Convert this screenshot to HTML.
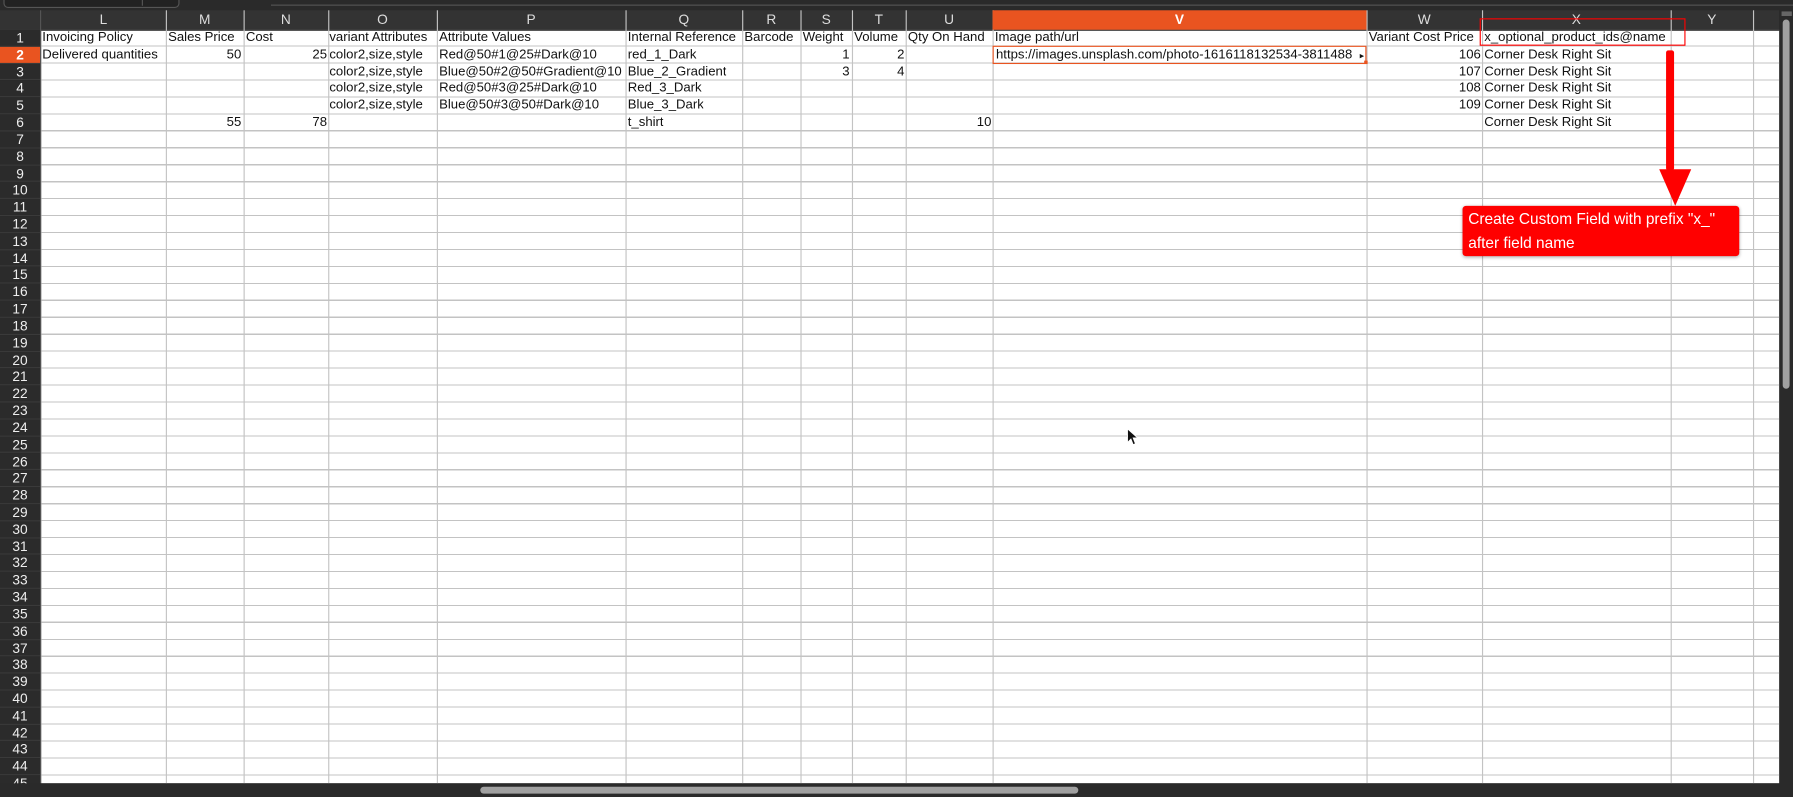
<!DOCTYPE html>
<html><head><meta charset="utf-8">
<style>
html,body{margin:0;padding:0;width:1793px;height:797px;overflow:hidden;background:#2a2a2a}
#s{position:absolute;left:0;top:0;width:1568px;height:697px;transform:scale(1.14349);transform-origin:0 0;background:#2a2a2a;font-family:"Liberation Sans",sans-serif;overflow:hidden}
.grid{position:absolute;left:36px;top:26px;width:1520px;height:659px;background:#fff}
.vl{position:absolute;top:9px;width:1px;height:676px;background:#c3c3c3}
.hdr{position:absolute;left:0;top:9px;width:1556px;height:17px;background:#333;border-bottom:1px solid #555}
.hl{position:absolute;top:9px;height:17px;line-height:17px;text-align:center;color:#ddd;font-size:12px}
.rn{position:absolute;left:0;width:35px;height:14.82px;line-height:15px;text-align:center;color:#eee;font-size:12px;background:#2b2b2b;border-bottom:1px solid #3a3a3a;box-sizing:border-box}
.c{position:absolute;height:14.82px;line-height:15.5px;font-size:11.5px;color:#111;white-space:nowrap;overflow:hidden}
.r{text-align:right}
</style></head><body><div id="s">
<div style="position:absolute;left:3px;top:-4px;width:152px;height:9px;border:1px solid #555;border-radius:4px;background:#222"></div>
<div style="position:absolute;left:124px;top:0;width:1px;height:5px;background:#555"></div>
<div style="position:absolute;left:237px;top:4px;width:1331px;height:1px;background:#555"></div>
<div class="grid"></div>
<svg style="position:absolute;left:36px;top:26px" width="1520" height="660" shape-rendering="crispEdges">
<g stroke="#c3c3c3" stroke-width="1">
<line x1="0" x2="1520" y1="14.3" y2="14.3"/><line x1="0" x2="1520" y1="29.1" y2="29.1"/><line x1="0" x2="1520" y1="43.9" y2="43.9"/><line x1="0" x2="1520" y1="58.8" y2="58.8"/><line x1="0" x2="1520" y1="73.6" y2="73.6"/><line x1="0" x2="1520" y1="88.4" y2="88.4"/><line x1="0" x2="1520" y1="103.2" y2="103.2"/><line x1="0" x2="1520" y1="118.1" y2="118.1"/><line x1="0" x2="1520" y1="132.9" y2="132.9"/><line x1="0" x2="1520" y1="147.7" y2="147.7"/><line x1="0" x2="1520" y1="162.5" y2="162.5"/><line x1="0" x2="1520" y1="177.3" y2="177.3"/><line x1="0" x2="1520" y1="192.2" y2="192.2"/><line x1="0" x2="1520" y1="207" y2="207"/><line x1="0" x2="1520" y1="221.8" y2="221.8"/><line x1="0" x2="1520" y1="236.6" y2="236.6"/><line x1="0" x2="1520" y1="251.4" y2="251.4"/><line x1="0" x2="1520" y1="266.3" y2="266.3"/><line x1="0" x2="1520" y1="281.1" y2="281.1"/><line x1="0" x2="1520" y1="295.9" y2="295.9"/><line x1="0" x2="1520" y1="310.7" y2="310.7"/><line x1="0" x2="1520" y1="325.6" y2="325.6"/><line x1="0" x2="1520" y1="340.4" y2="340.4"/><line x1="0" x2="1520" y1="355.2" y2="355.2"/><line x1="0" x2="1520" y1="370" y2="370"/><line x1="0" x2="1520" y1="384.8" y2="384.8"/><line x1="0" x2="1520" y1="399.7" y2="399.7"/><line x1="0" x2="1520" y1="414.5" y2="414.5"/><line x1="0" x2="1520" y1="429.3" y2="429.3"/><line x1="0" x2="1520" y1="444.1" y2="444.1"/><line x1="0" x2="1520" y1="459" y2="459"/><line x1="0" x2="1520" y1="473.8" y2="473.8"/><line x1="0" x2="1520" y1="488.6" y2="488.6"/><line x1="0" x2="1520" y1="503.4" y2="503.4"/><line x1="0" x2="1520" y1="518.2" y2="518.2"/><line x1="0" x2="1520" y1="533.1" y2="533.1"/><line x1="0" x2="1520" y1="547.9" y2="547.9"/><line x1="0" x2="1520" y1="562.7" y2="562.7"/><line x1="0" x2="1520" y1="577.5" y2="577.5"/><line x1="0" x2="1520" y1="592.3" y2="592.3"/><line x1="0" x2="1520" y1="607.2" y2="607.2"/><line x1="0" x2="1520" y1="622" y2="622"/><line x1="0" x2="1520" y1="636.8" y2="636.8"/><line x1="0" x2="1520" y1="651.6" y2="651.6"/>
</g></svg>
<div class="hdr"></div>
<div class="vl" style="left:145px"></div><div class="vl" style="left:213px"></div><div class="vl" style="left:287px"></div><div class="vl" style="left:382px"></div><div class="vl" style="left:547px"></div><div class="vl" style="left:649px"></div><div class="vl" style="left:700px"></div><div class="vl" style="left:745px"></div><div class="vl" style="left:792px"></div><div class="vl" style="left:868px"></div><div class="vl" style="left:1195px"></div><div class="vl" style="left:1296px"></div><div class="vl" style="left:1461px"></div><div class="vl" style="left:1533px"></div>
<div style="position:absolute;left:35px;top:9px;width:1px;height:676px;background:#555"></div>
<div style="position:absolute;left:868px;top:9px;width:327px;height:17px;background:#e95420"></div>
<div class="hl" style="left:36px;width:109px">L</div><div class="hl" style="left:145px;width:68px">M</div><div class="hl" style="left:213px;width:74px">N</div><div class="hl" style="left:287px;width:95px">O</div><div class="hl" style="left:382px;width:165px">P</div><div class="hl" style="left:547px;width:102px">Q</div><div class="hl" style="left:649px;width:51px">R</div><div class="hl" style="left:700px;width:45px">S</div><div class="hl" style="left:745px;width:47px">T</div><div class="hl" style="left:792px;width:76px">U</div><div class="hl" style="left:868px;width:327px;color:#fff;font-weight:bold">V</div><div class="hl" style="left:1195px;width:101px">W</div><div class="hl" style="left:1296px;width:165px">X</div><div class="hl" style="left:1461px;width:72px">Y</div>
<div class="rn" style="top:26px">1</div><div class="rn" style="top:40.82px;background:#e95420;color:#fff;font-weight:bold">2</div><div class="rn" style="top:55.64px">3</div><div class="rn" style="top:70.46px">4</div><div class="rn" style="top:85.28px">5</div><div class="rn" style="top:100.1px">6</div><div class="rn" style="top:114.92px">7</div><div class="rn" style="top:129.74px">8</div><div class="rn" style="top:144.56px">9</div><div class="rn" style="top:159.38px">10</div><div class="rn" style="top:174.2px">11</div><div class="rn" style="top:189.02px">12</div><div class="rn" style="top:203.84px">13</div><div class="rn" style="top:218.66px">14</div><div class="rn" style="top:233.48px">15</div><div class="rn" style="top:248.3px">16</div><div class="rn" style="top:263.12px">17</div><div class="rn" style="top:277.94px">18</div><div class="rn" style="top:292.76px">19</div><div class="rn" style="top:307.58px">20</div><div class="rn" style="top:322.4px">21</div><div class="rn" style="top:337.22px">22</div><div class="rn" style="top:352.04px">23</div><div class="rn" style="top:366.86px">24</div><div class="rn" style="top:381.68px">25</div><div class="rn" style="top:396.5px">26</div><div class="rn" style="top:411.32px">27</div><div class="rn" style="top:426.14px">28</div><div class="rn" style="top:440.96px">29</div><div class="rn" style="top:455.78px">30</div><div class="rn" style="top:470.6px">31</div><div class="rn" style="top:485.42px">32</div><div class="rn" style="top:500.24px">33</div><div class="rn" style="top:515.06px">34</div><div class="rn" style="top:529.88px">35</div><div class="rn" style="top:544.7px">36</div><div class="rn" style="top:559.52px">37</div><div class="rn" style="top:574.34px">38</div><div class="rn" style="top:589.16px">39</div><div class="rn" style="top:603.98px">40</div><div class="rn" style="top:618.8px">41</div><div class="rn" style="top:633.62px">42</div><div class="rn" style="top:648.44px">43</div><div class="rn" style="top:663.26px">44</div><div class="rn" style="top:678.08px">45</div>
<!-- row 1 -->
<div class="c" style="top:26px;left:37px">Invoicing Policy</div><div class="c" style="top:26px;left:147px">Sales Price</div><div class="c" style="top:26px;left:215px">Cost</div><div class="c" style="top:26px;left:288px;width:94px">variant Attributes</div><div class="c" style="top:26px;left:384px">Attribute Values</div><div class="c" style="top:26px;left:549px;width:100px">Internal Reference</div><div class="c" style="top:26px;left:651px">Barcode</div><div class="c" style="top:26px;left:702px">Weight</div><div class="c" style="top:26px;left:747px">Volume</div><div class="c" style="top:26px;left:794px;width:74px">Qty On Hand</div><div class="c" style="top:26px;left:870px">Image path/url</div><div class="c" style="top:26px;left:1197px;width:98px">Variant Cost Price</div><div class="c" style="top:26px;left:1298px">x_optional_product_ids@name</div>
<!-- row 2 -->
<div class="c" style="top:40.82px;left:37px">Delivered quantities</div><div class="c r" style="top:40.82px;left:145px;width:66px">50</div><div class="c r" style="top:40.82px;left:213px;width:73px">25</div><div class="c" style="top:40.82px;left:288px;width:94px">color2,size,style</div><div class="c" style="top:40.82px;left:384px">Red@50#1@25#Dark@10</div><div class="c" style="top:40.82px;left:549px">red_1_Dark</div><div class="c r" style="top:40.82px;left:700px;width:43px">1</div><div class="c r" style="top:40.82px;left:745px;width:46px">2</div><div class="c" style="top:40.82px;left:871px;width:318px">https://images.unsplash.com/photo-1616118132534-3811488</div><div class="c" style="top:40.82px;left:1189px;font-size:8px">&#9656;</div><div class="c r" style="top:40.82px;left:1195px;width:100px">106</div><div class="c" style="top:40.82px;left:1298px">Corner Desk Right Sit</div>
<!-- row 3 -->
<div class="c" style="top:55.64px;left:288px;width:94px">color2,size,style</div><div class="c" style="top:55.64px;left:384px;width:163px">Blue@50#2@50#Gradient@10</div><div class="c" style="top:55.64px;left:549px">Blue_2_Gradient</div><div class="c r" style="top:55.64px;left:700px;width:43px">3</div><div class="c r" style="top:55.64px;left:745px;width:46px">4</div><div class="c r" style="top:55.64px;left:1195px;width:100px">107</div><div class="c" style="top:55.64px;left:1298px">Corner Desk Right Sit</div>
<!-- row 4 -->
<div class="c" style="top:70.46px;left:288px;width:94px">color2,size,style</div><div class="c" style="top:70.46px;left:384px">Red@50#3@25#Dark@10</div><div class="c" style="top:70.46px;left:549px">Red_3_Dark</div><div class="c r" style="top:70.46px;left:1195px;width:100px">108</div><div class="c" style="top:70.46px;left:1298px">Corner Desk Right Sit</div>
<!-- row 5 -->
<div class="c" style="top:85.28px;left:288px;width:94px">color2,size,style</div><div class="c" style="top:85.28px;left:384px">Blue@50#3@50#Dark@10</div><div class="c" style="top:85.28px;left:549px">Blue_3_Dark</div><div class="c r" style="top:85.28px;left:1195px;width:100px">109</div><div class="c" style="top:85.28px;left:1298px">Corner Desk Right Sit</div>
<!-- row 6 -->
<div class="c r" style="top:100.1px;left:145px;width:66px">55</div><div class="c r" style="top:100.1px;left:213px;width:73px">78</div><div class="c" style="top:100.1px;left:549px">t_shirt</div><div class="c r" style="top:100.1px;left:792px;width:75px">10</div><div class="c" style="top:100.1px;left:1298px">Corner Desk Right Sit</div>
<!-- selection -->
<div style="position:absolute;left:868px;top:40px;width:325px;height:14px;border:1px solid #e95420"></div>
<div style="position:absolute;left:1193px;top:53px;width:3px;height:3px;background:#e95420"></div>
<!-- annotation -->
<div style="position:absolute;left:1294px;top:16px;width:178px;height:22px;border:1.5px solid #ff0000"></div>
<div style="position:absolute;left:1457px;top:44px;width:7px;height:105px;background:#ff0000;border-radius:2px"></div>
<svg style="position:absolute;left:1449px;top:146px" width="32" height="36"><polygon points="2,2 30,2 16,34" fill="#ff0000"/></svg>
<div style="position:absolute;left:1279px;top:180px;width:242px;height:44px;background:#ff0000;border-radius:3px;box-shadow:0 1px 3px rgba(0,0,0,.3);color:#fff;font-size:13.5px;line-height:21px;padding:1px 0 0 5px;box-sizing:border-box">Create Custom Field with prefix "x_"<br>after field name</div>
<!-- cursor -->
<svg style="position:absolute;left:985px;top:374px" width="12" height="16"><path d="M1,1 L1,13 L4,10 L6,15 L8,14 L6,9 L10,9 Z" fill="#111" stroke="#fff" stroke-width="0.8"/></svg>
<!-- scrollbars -->
<div style="position:absolute;left:0;top:685px;width:1568px;height:12px;background:#2a2a2a"></div>
<div style="position:absolute;left:420px;top:688px;width:523px;height:6px;background:#a0a0a0;border-radius:3px"></div>
<div style="position:absolute;left:1556px;top:9px;width:12px;height:676px;background:#2a2a2a"></div>
<div style="position:absolute;left:1558px;top:10px;width:9px;height:4px;background:#666"></div>
<div style="position:absolute;left:1559px;top:17px;width:6px;height:323px;background:#a0a0a0;border-radius:3px"></div>
</div></body></html>
